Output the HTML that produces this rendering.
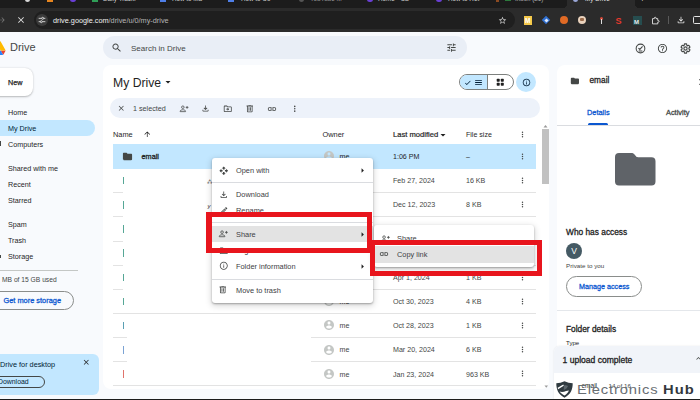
<!DOCTYPE html>
<html><head><meta charset="utf-8"><title>My Drive</title>
<style>
*{box-sizing:border-box;margin:0;padding:0}
html,body{width:700px;height:400px;overflow:hidden}
body{position:relative;background:#f8fafd;font-family:"Liberation Sans",sans-serif;color:#1f1f1f}
.a{position:absolute}
.t{position:absolute;white-space:nowrap;line-height:1;transform:translateY(calc(-50% + .6px))}
svg{position:absolute;display:block;overflow:visible}
.ic{fill:#444746}
.nav{font-size:7.2px;color:#1f1f1f;left:8px}
.hd{font-size:7.4px;color:#1f1f1f}
.cell{font-size:7.1px;color:#444746}
.mi{font-size:7.4px;color:#3c4043;left:24px}
.m{-webkit-text-stroke:.3px currentColor}
.sep{position:absolute;height:1px;background:#e3e3e3}
</style></head><body>

<!-- ===== browser chrome ===== -->
<div class="a" id="tabstrip" style="left:0;top:0;width:700px;height:8px;background:#1c1c1c;overflow:hidden">
  <div class="a" style="left:567px;top:0;width:68px;height:8px;background:#2b2b2b"></div><div class="a" style="left:563px;top:4px;width:4px;height:4px;background:radial-gradient(circle at 0 0,#1c1c1c 3.800px,#2b2b2b 4.200px)"></div><div class="a" style="left:635px;top:4px;width:4px;height:4px;background:radial-gradient(circle at 100% 0,#1c1c1c 3.800px,#2b2b2b 4.200px)"></div>
  <div class="a" style="left:25px;top:-3px;width:5px;height:5px;border-radius:3px;background:#d8d8d8"></div>
  <div class="a" style="left:47px;top:-3px;width:6px;height:5px;background:#e8861f"></div>
  <div class="a" style="left:70px;top:-3px;width:6px;height:5px;border-radius:3px;background:#6a3fd6"></div>
  <div class="a" style="left:92px;top:-3px;width:6px;height:5px;background:#2f9e57"></div>
  <div class="a" style="left:160px;top:-3px;width:6px;height:5px;background:#4f7fe8"></div>
  <div class="a" style="left:228px;top:-3px;width:6px;height:5px;background:#4f7fe8"></div>
  <div class="a" style="left:299px;top:-3px;width:5px;height:5px;border-radius:3px;background:#555"></div>
  <div class="a" style="left:367px;top:-3px;width:6px;height:5px;border-radius:3px;background:#6a3fd6"></div>
  <div class="a" style="left:436px;top:-3px;width:6px;height:5px;border-radius:3px;background:#6a3fd6"></div>
  <div class="a" style="left:496px;top:-3px;width:3px;height:5px;background:#8a4a22"></div>
  <div class="a" style="left:505px;top:-3px;width:6px;height:4px;background:#2c7a3c"></div>
  <div class="a" style="left:573px;top:-3px;width:5px;height:5px;border-radius:3px;background:#9aa7d8"></div>
  <span class="t tb" style="left:103px">Daily Tracki</span>
  <span class="t tb" style="left:172px">How to Ma</span>
  <span class="t tb" style="left:241px">How to Co</span>
  <span class="t tb" style="left:310px;color:#9a9a9a">YouTube M</span>
  <span class="t tb" style="left:378px">Home - Ca</span>
  <span class="t tb" style="left:448px">How to Ret</span>
  <span class="t tb" style="left:515px;color:#aaa">Inbox (21)</span>
  <span class="t tb" style="left:585px;color:#e8e8e8">My Drive</span>
  <span class="t tb" style="left:640px;color:#ddd;font-size:8px">+</span>
</div>
<style>.tb{font-size:6.3px;color:#cfcfcf;top:-1.2px}</style>
<div class="a" id="toolbar" style="left:0;top:8px;width:700px;height:24px;background:#2b2b2b"></div>
<div class="a" id="urlpill" style="left:34px;top:11px;width:481px;height:18px;border-radius:9px;background:#1f1f1f"></div>
<div class="a" style="left:36px;top:14px;width:12px;height:12px;border-radius:6px;background:#3a3a3a"></div>
<svg style="left:38px;top:16px" width="8" height="8" viewBox="0 0 24 24"><g fill="none" stroke="#e3e3e3" stroke-width="2.6"><path d="M2 7h9M17 7h5M2 17h5M13 17h9"/><circle cx="14" cy="7" r="3"/><circle cx="10" cy="17" r="3"/></g></svg>
<svg style="left:-2px;top:16px" width="8" height="8" viewBox="0 0 24 24"><path d="M12 4l-1.4 1.4 5.6 5.6H2v2h14.2l-5.6 5.6L12 20l8-8z" fill="#777"/></svg>
<svg style="left:15.500px;top:15px" width="10" height="10" viewBox="0 0 24 24"><path d="M19 6.41L17.59 5 12 10.590 6.41 5 5 6.410 10.590 12 5 17.590 6.410 19 12 13.410 17.590 19 19 17.590 13.410 12z" fill="#e3e3e3"/></svg>
<span class="t" id="url" style="left:53px;top:20.3px;font-size:7.3px;color:#f1f1f1">drive.google.com<span style="color:#b5b5b5">/drive/u/0/my-drive</span></span>
<svg style="left:498px;top:15.5px" width="9" height="9" viewBox="0 0 24 24"><path fill="#e3e3e3" d="M22 9.240l-7.190-.62L12 2 9.190 8.630 2 9.240l5.460 4.730L5.820 21 12 16.770 18.180 21l-1.630-7.030L22 9.240zM12 15.400l-3.760 2.270 1-4.280-3.320-2.880 4.380-.38L12 6.100l1.710 4.040 4.380.380-3.320 2.880 1 4.280L12 15.400z"/></svg>
<!-- extensions -->
<div class="a" style="left:524px;top:16px;width:8px;height:9px;background:#f4c84a"></div>
<span class="t" style="left:525px;top:20.5px;font-size:6.5px;color:#fff;font-weight:bold">M</span>
<div class="a" style="left:542px;top:16px;width:8px;height:8px;background:#2f6fd0;transform:rotate(45deg) scale(.75)"></div>
<div class="a" style="left:544.500px;top:18.500px;width:3px;height:3px;background:#dfe9fb;transform:rotate(45deg)"></div>
<div class="a" style="left:560px;top:16px;width:8px;height:8px;border-radius:4px;background:#e06a25"></div>
<div class="a" style="left:578px;top:16px;width:8px;height:8px;border-radius:4px;background:#e9d2bd"></div>
<div class="a" style="left:580px;top:18px;width:4px;height:3px;background:#9b6b4b;border-radius:1px"></div>
<div class="a" style="left:599.500px;top:16.500px;width:3px;height:3px;border-radius:2px;background:#d64a3a"></div>
<div class="a" style="left:600.500px;top:19px;width:1px;height:4.500px;background:#ddd"></div>
<span class="t" style="left:615.500px;top:20.5px;font-size:9px;color:#e5392d;font-weight:bold">S</span>
<div class="a" style="left:633px;top:16px;width:8.500px;height:8.500px;background:#264d4f"></div>
<span class="t" style="left:634px;top:20.600px;font-size:6px;color:#e6eeee;font-weight:bold">M</span>
<svg style="left:650.500px;top:15.500px" width="9" height="9" viewBox="0 0 24 24"><path fill="none" stroke="#e3e3e3" stroke-width="2.4" d="M4 7h5V5.500a2.200 2.200 0 014.400 0V7H18v5h1.500a2.200 2.200 0 010 4.400H18V21H4z"/></svg>
<div class="a" style="left:668px;top:16px;width:1px;height:8px;background:#5a5a5a"></div>
<svg style="left:676px;top:15px" width="10" height="10" viewBox="0 0 24 24"><path fill="#e3e3e3" d="M18 15v3H6v-3H4v3c0 1.100.9 2 2 2h12c1.100 0 2-.9 2-2v-3h-2zm-1-4l-1.410-1.410L13 12.170V4h-2v8.170L8.410 9.590 7 11l5 5 5-5z"/></svg>
<div class="a" style="left:693px;top:16px;width:9px;height:8px;border:1.200px solid #e3e3e3;border-radius:1.500px"></div>

<!-- ===== drive header ===== -->
<svg style="left:-10.500px;top:41px" width="15.500" height="14" viewBox="0 0 87.300 78"><path d="M6.600 66.850l3.850 6.650c.8 1.400 1.950 2.500 3.300 3.300L27.500 53H0c0 1.550.4 3.100 1.200 4.500z" fill="#0066da"/><path d="M43.650 25L29.900 1.200c-1.350.8-2.500 1.900-3.300 3.300L1.200 48.500C.4 49.900 0 51.450 0 53h27.500z" fill="#00ac47"/><path d="M73.550 76.800c1.350-.8 2.500-1.900 3.300-3.300l1.600-2.750 7.650-13.250c.8-1.400 1.200-2.950 1.200-4.500H59.800l5.850 11.500z" fill="#ea4335"/><path d="M43.650 25L57.400 1.200C56.050.4 54.500 0 52.900 0H34.400c-1.600 0-3.150.45-4.500 1.200z" fill="#00832d"/><path d="M59.800 53H27.500L13.750 76.800c1.350.8 2.900 1.200 4.500 1.200h50.800c1.600 0 3.150-.45 4.500-1.200z" fill="#2684fc"/><path d="M73.400 26.500L60.700 4.500c-.8-1.400-1.950-2.500-3.300-3.300L43.650 25 59.800 53h27.450c0-1.550-.4-3.100-1.200-4.500z" fill="#ffba00"/></svg>
<span class="t" id="drive" style="left:10px;top:46.700px;font-size:11px;color:#444746">Drive</span>
<div class="a" id="search" style="left:102.500px;top:36px;width:364px;height:23px;border-radius:11.500px;background:#e9eef6"></div>
<svg class="ic" style="left:111px;top:42.200px" width="11.500" height="11.500" viewBox="0 0 24 24"><path d="M15.500 14h-.79l-.28-.27C15.410 12.590 16 11.110 16 9.500 16 5.910 13.090 3 9.500 3S3 5.910 3 9.500 5.910 16 9.500 16c1.610 0 3.090-.59 4.230-1.570l.27.280v.79l5 4.990L20.490 19l-4.990-5zm-6 0C7.010 14 5 11.990 5 9.500S7.010 5 9.500 5 14 7.010 14 9.500 11.990 14 9.500 14z"/></svg>
<span class="t" id="sid" style="left:131px;top:47.800px;font-size:8px;color:#444746">Search in Drive</span>
<svg class="ic" style="left:446.200px;top:42.200px" width="11" height="11" viewBox="0 0 24 24"><path d="M3 17v2h6v-2H3zM3 5v2h10V5H3zm10 16v-2h8v-2h-8v-2h-2v6h2zM7 9v2H3v2h4v2h2V9H7zm14 4v-2H11v2h10zm-6-4h2V7h4V5h-4V3h-2v6z"/></svg>
<!-- header right icons -->
<svg style="left:635px;top:42.500px" width="11" height="11" viewBox="0 0 24 24"><g fill="none" stroke="#444746" stroke-width="2.300"><circle cx="12" cy="12" r="9.500"/><path d="M7.500 11l3 3 6-6.500M8 17.500h8"/></g></svg>
<svg class="ic" style="left:657px;top:42.500px" width="11" height="11" viewBox="0 0 24 24"><path d="M11 18h2v-2h-2v2zm1-16C6.480 2 2 6.480 2 12s4.480 10 10 10 10-4.480 10-10S17.520 2 12 2zm0 18c-4.410 0-8-3.590-8-8s3.590-8 8-8 8 3.590 8 8-3.590 8-8 8zm0-14c-2.210 0-4 1.790-4 4h2c0-1.100.9-2 2-2s2 .9 2 2c0 2-3 1.750-3 5h2c0-2.250 3-2.500 3-5 0-2.210-1.790-4-4-4z"/></svg>
<svg class="ic" style="left:679.500px;top:42.500px" width="11" height="11" viewBox="0 0 24 24"><path d="M19.430 12.980c.04-.32.070-.64.070-.98 0-.34-.03-.66-.07-.98l2.110-1.650c.19-.15.240-.42.120-.64l-2-3.460c-.09-.16-.26-.25-.44-.25-.06 0-.12.010-.17.030l-2.490 1c-.52-.4-1.080-.73-1.690-.98l-.38-2.650C14.460 2.180 14.250 2 14 2h-4c-.25 0-.46.180-.49.420l-.38 2.650c-.61.250-1.170.59-1.690.98l-2.490-1c-.06-.02-.12-.03-.18-.03-.17 0-.34.090-.43.250l-2 3.460c-.13.220-.07.490.12.640l2.110 1.650c-.04.320-.07.650-.07.980 0 .33.030.66.070.98l-2.110 1.650c-.19.150-.24.420-.12.640l2 3.460c.09.160.26.250.44.250.06 0 .12-.01.170-.03l2.490-1c.52.400 1.080.73 1.690.98l.38 2.650c.03.240.24.420.49.420h4c.25 0 .46-.18.490-.42l.38-2.650c.61-.25 1.170-.59 1.690-.98l2.490 1c.06.020.12.030.18.030.17 0 .34-.09.430-.25l2-3.460c.12-.22.070-.49-.12-.64l-2.110-1.650zM12 15.500c-1.930 0-3.500-1.570-3.500-3.500s1.570-3.500 3.500-3.500 3.500 1.570 3.500 3.500-1.570 3.500-3.500 3.500z" fill-rule="evenodd" fill="none" stroke="#444746" stroke-width="2.500"/></svg>

<!-- ===== left nav ===== -->
<div class="a" id="newbtn" style="left:-10px;top:68px;width:42.500px;height:28px;border-radius:8px;background:#fff;box-shadow:0 .5px 1.500px rgba(0,0,0,.18),0 1px 3px rgba(0,0,0,.1)"></div>
<span class="t" id="new" style="left:8px;top:81.500px;font-size:7.200px;color:#1f1f1f;-webkit-text-stroke:.25px #1f1f1f">New</span>
<div class="a" style="left:-10px;top:120px;width:104.500px;height:16px;border-radius:8px;background:#c2e7ff"></div>
<span class="t nav" style="top:112.300px">Home</span>
<span class="t nav" style="top:128.300px;color:#001d35">My Drive</span>
<span class="t nav" style="top:144.300px">Computers</span>
<div class="a" style="left:-1px;top:141px;width:2px;height:5px;background:#444746"></div>
<span class="t nav" style="top:168.300px">Shared with me</span>
<span class="t nav" style="top:184.300px">Recent</span>
<span class="t nav" style="top:200.300px">Starred</span>
<span class="t nav" style="top:224.300px">Spam</span>
<span class="t nav" style="top:240.300px">Trash</span>
<span class="t nav" style="top:256.300px">Storage</span>
<div class="a" style="left:-1px;top:255px;width:1.500px;height:3px;background:#444746"></div>
<div class="a" style="left:0;top:269.500px;width:78px;height:1.500px;background:#c4c7c5"></div>
<span class="t" style="left:2px;top:280.300px;font-size:6.700px;color:#444746">MB of 15 GB used</span>
<div class="a" style="left:-12px;top:291.300px;width:85.500px;height:19px;border-radius:9.500px;border:.7px solid #8a8d8b"></div>
<span class="t" id="gms" style="left:3.500px;top:300.200px;font-size:7.400px;color:#0b57d0;-webkit-text-stroke:.28px #0b57d0">Get more storage</span>
<div class="a" style="left:-8px;top:354px;width:106.500px;height:41px;border-radius:6px;background:#c2e7ff"></div>
<span class="t" style="left:0;top:363.700px;font-size:7.300px;color:#001d35">Drive for desktop</span>
<svg style="left:82px;top:358px" width="8.500" height="8.500" viewBox="0 0 24 24"><path d="M19 6.410L17.590 5 12 10.590 6.410 5 5 6.410 10.590 12 5 17.590 6.410 19 12 13.410 17.590 19 19 17.590 13.410 12z" fill="#1f1f1f"/></svg>
<div class="a" style="left:-10px;top:376px;width:54.500px;height:12px;border-radius:6px;border:.8px solid #444746"></div>
<span class="t" style="left:-2px;top:382.200px;font-size:6.900px;color:#001d35">Download</span>

<!-- ===== main card ===== -->
<div class="a" id="card" style="left:103px;top:64.500px;width:446px;height:324px;border-radius:8px;background:#fff"></div>
<span class="t" id="mydrive" style="left:113px;top:82.700px;font-size:12.200px;color:#1f1f1f">My Drive</span>
<svg style="left:162px;top:76.200px" width="12" height="12" viewBox="0 0 24 24"><path d="M7 10l5 5 5-5z" fill="#1f1f1f"/></svg>
<!-- view toggle -->
<div class="a" style="left:459px;top:74.200px;width:55px;height:15.500px;border-radius:8px;border:.7px solid #7d807e;background:#fff;overflow:hidden"><div class="a" style="left:0;top:0;width:27.500px;height:15px;background:#c2e7ff;border-right:.7px solid #7d807e"></div></div>
<svg style="left:463.500px;top:78.500px" width="7.500" height="7.500" viewBox="0 0 24 24"><path d="M9 16.170L4.830 12l-1.420 1.410L9 19 21 7l-1.410-1.410z" fill="#001d35"/></svg>
<svg style="left:473.500px;top:78px" width="9" height="9" viewBox="0 0 24 24"><path d="M3 18h18v-2.200H3V18zm0-4.900h18v-2.200H3v2.200zM3 6v2.200h18V6H3z" fill="#001d35"/></svg>
<svg style="left:496px;top:78px" width="8.500" height="8.500" viewBox="0 0 24 24"><g fill="#1f1f1f"><rect x="2" y="2" width="8.500" height="8.500" rx="2"/><rect x="13.500" y="2" width="8.500" height="8.500" rx="2"/><rect x="2" y="13.500" width="8.500" height="8.500" rx="2"/><rect x="13.500" y="13.500" width="8.500" height="8.500" rx="2"/></g></svg>
<div class="a" style="left:516px;top:72px;width:20px;height:20px;border-radius:10px;background:#c2e7ff"></div>
<svg style="left:521.500px;top:77.500px" width="9" height="9" viewBox="0 0 24 24"><path fill="#001d35" d="M11 7h2v2h-2zm0 4h2v6h-2zm1-9C6.480 2 2 6.480 2 12s4.480 10 10 10 10-4.480 10-10S17.520 2 12 2zm0 18c-4.410 0-8-3.590-8-8s3.590-8 8-8 8 3.590 8 8-3.590 8-8 8z"/></svg>
<!-- selection toolbar -->
<div class="a" id="selbar" style="left:110px;top:98px;width:430px;height:20px;border-radius:10px;background:#edf2fa"></div>
<svg style="left:117px;top:104px" width="8.500" height="8.500" viewBox="0 0 24 24"><path d="M19 6.410L17.590 5 12 10.590 6.410 5 5 6.410 10.590 12 5 17.590 6.410 19 12 13.410 17.590 19 19 17.590 13.410 12z" fill="#444746"/></svg>
<span class="t" id="sel" style="left:133px;top:108.300px;font-size:7.200px;color:#444746">1 selected</span>
<svg style="left:178.500px;top:103.500px" width="10" height="9.500" viewBox="0 0 26 24"><g fill="none" stroke="#444746" stroke-width="2"><circle cx="10" cy="8" r="3.300"/><path d="M3 19.500v-1.300c0-2.300 4.500-3.600 7-3.600s7 1.300 7 3.600v1.300z"/><path d="M21 5v7M17.500 8.500h7"/></g></svg>
<svg class="ic" style="left:200.500px;top:103.500px" width="9" height="9" viewBox="0 0 24 24"><path d="M18 15v3H6v-3H4v3c0 1.100.9 2 2 2h12c1.100 0 2-.9 2-2v-3h-2zm-1-4l-1.410-1.410L13 12.170V4h-2v8.170L8.410 9.590 7 11l5 5 5-5z"/></svg>
<svg class="ic" style="left:222.500px;top:103.500px" width="9.500" height="9.500" viewBox="0 0 24 24"><path d="M20 6h-8l-2-2H4c-1.100 0-2 .9-2 2v12c0 1.100.9 2 2 2h16c1.100 0 2-.9 2-2V8c0-1.100-.9-2-2-2zm0 12H4V6h5.170l2 2H20v10zm-7.840-1.590L15.590 13l-3.430-3.410L10.750 11l1 1H8v2h3.750l-1 1 1.410 1.410z"/></svg>
<svg class="ic" style="left:245px;top:103.500px" width="9.500" height="9.500" viewBox="0 0 24 24"><path d="M15 4V3H9v1H4v2h1v13c0 1.100.9 2 2 2h10c1.100 0 2-.9 2-2V6h1V4h-5zm2 15H7V6h10v13zM9 8h2v9H9zm4 0h2v9h-2z"/></svg>
<svg class="ic" style="left:267px;top:103.500px" width="10" height="10" viewBox="0 0 24 24"><path d="M3.900 12c0-1.710 1.390-3.100 3.100-3.100h4V7H7c-2.760 0-5 2.240-5 5s2.240 5 5 5h4v-1.900H7c-1.710 0-3.100-1.390-3.100-3.100zM8 13h8v-2H8v2zm9-6h-4v1.900h4c1.710 0 3.100 1.390 3.100 3.100s-1.390 3.100-3.100 3.100h-4V17h4c2.760 0 5-2.240 5-5s-2.240-5-5-5z"/></svg>
<svg class="ic" style="left:289.500px;top:103.500px" width="9.500" height="9.500" viewBox="0 0 24 24"><path d="M12 8c1.100 0 2-.9 2-2s-.9-2-2-2-2 .9-2 2 .9 2 2 2zm0 2c-1.100 0-2 .9-2 2s.9 2 2 2 2-.9 2-2-.9-2-2-2zm0 6c-1.100 0-2 .9-2 2s.9 2 2 2 2-.9 2-2-.9-2-2-2z"/></svg>
<!-- header row -->
<span class="t hd" id="hname" style="left:113px;top:134.300px">Name</span>
<svg style="left:143px;top:130px" width="8.500" height="8.500" viewBox="0 0 24 24"><path d="M4 12l1.410 1.410L11 7.830V20h2V7.830l5.580 5.590L20 12l-8-8-8 8z" fill="#1f1f1f"/></svg>
<span class="t hd" id="howner" style="left:322.500px;top:134.300px">Owner</span>
<span class="t hd" id="hmod" style="left:393px;top:134.300px;font-size:7.600px;-webkit-text-stroke:.2px #1f1f1f">Last modified</span>
<svg style="left:437px;top:128.600px" width="12" height="12" viewBox="0 0 24 24"><path d="M7 10l5 5 5-5z" fill="#1f1f1f"/></svg>
<span class="t hd" id="hsize" style="left:466px;top:134.300px;font-size:7.050px">File size</span>
<svg class="ic" style="left:517.500px;top:129.500px" width="9" height="9" viewBox="0 0 24 24"><path d="M12 8c1.100 0 2-.9 2-2s-.9-2-2-2-2 .9-2 2 .9 2 2 2zm0 2c-1.100 0-2 .9-2 2s.9 2 2 2 2-.9 2-2-.9-2-2-2zm0 6c-1.100 0-2 .9-2 2s.9 2 2 2 2-.9 2-2-.9-2-2-2z"/></svg>
<!-- scrollbar -->
<svg style="left:543px;top:123.500px" width="5" height="4" viewBox="0 0 10 8"><path d="M1 7l4-5 4 5z" fill="#9a9a9a"/></svg>
<div class="a" style="left:542px;top:129px;width:7px;height:55px;background:#c1c1c1"></div>
<svg style="left:543.500px;top:384.500px" width="4.500" height="3.500" viewBox="0 0 10 8"><path d="M1 1l4 5 4-5z" fill="#9a9a9a"/></svg>
<!-- rows -->
<div class="a" id="selrow" style="left:113px;top:144px;width:422.500px;height:24.500px;background:#c2e7ff"></div>
<svg style="left:121.500px;top:150.500px" width="11" height="11" viewBox="0 0 24 24"><path d="M10 4H4c-1.100 0-1.990.9-1.990 2L2 18c0 1.100.9 2 2 2h16c1.100 0 2-.9 2-2V8c0-1.100-.9-2-2-2h-8l-2-2z" fill="#444746"/></svg>
<span class="t m" id="email" style="left:141.500px;top:156.300px;font-size:7.300px;color:#1f1f1f">email</span>
<svg style="left:323px;top:150.1px" width="12" height="12" viewBox="0 0 24 24"><path d="M12 2C6.480 2 2 6.480 2 12s4.480 10 10 10 10-4.480 10-10S17.520 2 12 2zm0 3c1.660 0 3 1.340 3 3s-1.340 3-3 3-3-1.340-3-3 1.340-3 3-3zm0 14.200c-2.500 0-4.710-1.280-6-3.220.03-1.990 4-3.080 6-3.080 1.990 0 5.970 1.090 6 3.080-1.290 1.940-3.500 3.220-6 3.220z" fill="#c4c7c5"/></svg>
<span class="t cell" style="left:339.500px;top:157.0px;color:#1f1f1f">me</span>
<span class="t cell" style="left:393px;top:157.0px;color:#1f1f1f">1:06 PM</span>
<span class="t cell" style="left:466px;top:157.0px;color:#1f1f1f">–</span>
<svg class="ic" style="left:517.500px;top:151.7px" width="9" height="9" viewBox="0 0 24 24"><path d="M12 8c1.100 0 2-.9 2-2s-.9-2-2-2-2 .9-2 2 .9 2 2 2zm0 2c-1.100 0-2 .9-2 2s.9 2 2 2 2-.9 2-2-.9-2-2-2zm0 6c-1.100 0-2 .9-2 2s.9 2 2 2 2-.9 2-2-.9-2-2-2z"/></svg>
<svg style="left:323px;top:174.3px" width="12" height="12" viewBox="0 0 24 24"><path d="M12 2C6.480 2 2 6.480 2 12s4.480 10 10 10 10-4.480 10-10S17.520 2 12 2zm0 3c1.660 0 3 1.340 3 3s-1.340 3-3 3-3-1.340-3-3 1.340-3 3-3zm0 14.200c-2.500 0-4.710-1.280-6-3.220.03-1.990 4-3.080 6-3.080 1.990 0 5.970 1.090 6 3.080-1.290 1.940-3.500 3.220-6 3.220z" fill="#c4c7c5"/></svg>
<span class="t cell" style="left:339.500px;top:181.2px;color:#444746">me</span>
<span class="t cell" style="left:393px;top:181.2px;color:#444746">Feb 27, 2024</span>
<span class="t cell" style="left:466px;top:181.2px;color:#444746">16 KB</span>
<svg class="ic" style="left:517.500px;top:175.9px" width="9" height="9" viewBox="0 0 24 24"><path d="M12 8c1.100 0 2-.9 2-2s-.9-2-2-2-2 .9-2 2 .9 2 2 2zm0 2c-1.100 0-2 .9-2 2s.9 2 2 2 2-.9 2-2-.9-2-2-2zm0 6c-1.100 0-2 .9-2 2s.9 2 2 2 2-.9 2-2-.9-2-2-2z"/></svg>
<div class="sep" style="left:113px;top:192.2px;width:422.500px"></div>
<svg style="left:323px;top:198.4px" width="12" height="12" viewBox="0 0 24 24"><path d="M12 2C6.480 2 2 6.480 2 12s4.480 10 10 10 10-4.480 10-10S17.520 2 12 2zm0 3c1.660 0 3 1.340 3 3s-1.340 3-3 3-3-1.340-3-3 1.340-3 3-3zm0 14.200c-2.500 0-4.710-1.280-6-3.220.03-1.990 4-3.080 6-3.080 1.990 0 5.970 1.090 6 3.080-1.290 1.940-3.500 3.220-6 3.220z" fill="#c4c7c5"/></svg>
<span class="t cell" style="left:339.500px;top:205.3px;color:#444746">me</span>
<span class="t cell" style="left:393px;top:205.3px;color:#444746">Dec 12, 2023</span>
<span class="t cell" style="left:466px;top:205.3px;color:#444746">8 KB</span>
<svg class="ic" style="left:517.500px;top:200.0px" width="9" height="9" viewBox="0 0 24 24"><path d="M12 8c1.100 0 2-.9 2-2s-.9-2-2-2-2 .9-2 2 .9 2 2 2zm0 2c-1.100 0-2 .9-2 2s.9 2 2 2 2-.9 2-2-.9-2-2-2zm0 6c-1.100 0-2 .9-2 2s.9 2 2 2 2-.9 2-2-.9-2-2-2z"/></svg>
<div class="sep" style="left:113px;top:216.3px;width:422.500px"></div>
<svg style="left:323px;top:222.6px" width="12" height="12" viewBox="0 0 24 24"><path d="M12 2C6.480 2 2 6.480 2 12s4.480 10 10 10 10-4.480 10-10S17.520 2 12 2zm0 3c1.660 0 3 1.340 3 3s-1.340 3-3 3-3-1.340-3-3 1.340-3 3-3zm0 14.200c-2.500 0-4.710-1.280-6-3.220.03-1.990 4-3.080 6-3.080 1.990 0 5.970 1.090 6 3.080-1.290 1.940-3.500 3.220-6 3.220z" fill="#c4c7c5"/></svg>
<span class="t cell" style="left:339.500px;top:229.5px;color:#444746">me</span>
<span class="t cell" style="left:393px;top:229.5px;color:#444746">Jan 5, 2024</span>
<span class="t cell" style="left:466px;top:229.5px;color:#444746">2 KB</span>
<svg class="ic" style="left:517.500px;top:224.2px" width="9" height="9" viewBox="0 0 24 24"><path d="M12 8c1.100 0 2-.9 2-2s-.9-2-2-2-2 .9-2 2 .9 2 2 2zm0 2c-1.100 0-2 .9-2 2s.9 2 2 2 2-.9 2-2-.9-2-2-2zm0 6c-1.100 0-2 .9-2 2s.9 2 2 2 2-.9 2-2-.9-2-2-2z"/></svg>
<div class="sep" style="left:113px;top:240.5px;width:422.500px"></div>
<svg style="left:323px;top:246.8px" width="12" height="12" viewBox="0 0 24 24"><path d="M12 2C6.480 2 2 6.480 2 12s4.480 10 10 10 10-4.480 10-10S17.520 2 12 2zm0 3c1.660 0 3 1.340 3 3s-1.340 3-3 3-3-1.340-3-3 1.340-3 3-3zm0 14.200c-2.500 0-4.710-1.280-6-3.220.03-1.990 4-3.080 6-3.080 1.990 0 5.970 1.090 6 3.080-1.290 1.940-3.500 3.220-6 3.220z" fill="#c4c7c5"/></svg>
<span class="t cell" style="left:339.500px;top:253.7px;color:#444746">me</span>
<span class="t cell" style="left:393px;top:253.7px;color:#444746">Mar 2, 2024</span>
<span class="t cell" style="left:466px;top:253.7px;color:#444746">3 KB</span>
<svg class="ic" style="left:517.500px;top:248.4px" width="9" height="9" viewBox="0 0 24 24"><path d="M12 8c1.100 0 2-.9 2-2s-.9-2-2-2-2 .9-2 2 .9 2 2 2zm0 2c-1.100 0-2 .9-2 2s.9 2 2 2 2-.9 2-2-.9-2-2-2zm0 6c-1.100 0-2 .9-2 2s.9 2 2 2 2-.9 2-2-.9-2-2-2z"/></svg>
<div class="sep" style="left:113px;top:264.6px;width:422.500px"></div>
<svg style="left:323px;top:271.0px" width="12" height="12" viewBox="0 0 24 24"><path d="M12 2C6.480 2 2 6.480 2 12s4.480 10 10 10 10-4.480 10-10S17.520 2 12 2zm0 3c1.660 0 3 1.340 3 3s-1.340 3-3 3-3-1.340-3-3 1.340-3 3-3zm0 14.200c-2.500 0-4.710-1.280-6-3.220.03-1.990 4-3.080 6-3.080 1.990 0 5.970 1.090 6 3.080-1.290 1.940-3.500 3.220-6 3.220z" fill="#c4c7c5"/></svg>
<span class="t cell" style="left:339.500px;top:277.9px;color:#444746">me</span>
<span class="t cell" style="left:393px;top:277.9px;color:#444746">Apr 1, 2024</span>
<span class="t cell" style="left:466px;top:277.9px;color:#444746">1 KB</span>
<svg class="ic" style="left:517.500px;top:272.6px" width="9" height="9" viewBox="0 0 24 24"><path d="M12 8c1.100 0 2-.9 2-2s-.9-2-2-2-2 .9-2 2 .9 2 2 2zm0 2c-1.100 0-2 .9-2 2s.9 2 2 2 2-.9 2-2-.9-2-2-2zm0 6c-1.100 0-2 .9-2 2s.9 2 2 2 2-.9 2-2-.9-2-2-2z"/></svg>
<div class="sep" style="left:113px;top:288.8px;width:422.500px"></div>
<svg style="left:323px;top:295.1px" width="12" height="12" viewBox="0 0 24 24"><path d="M12 2C6.480 2 2 6.480 2 12s4.480 10 10 10 10-4.480 10-10S17.520 2 12 2zm0 3c1.660 0 3 1.340 3 3s-1.340 3-3 3-3-1.340-3-3 1.340-3 3-3zm0 14.200c-2.500 0-4.710-1.280-6-3.220.03-1.990 4-3.080 6-3.080 1.990 0 5.970 1.090 6 3.080-1.290 1.940-3.500 3.220-6 3.220z" fill="#c4c7c5"/></svg>
<span class="t cell" style="left:339.500px;top:302.0px;color:#444746">me</span>
<span class="t cell" style="left:393px;top:302.0px;color:#444746">Oct 30, 2023</span>
<span class="t cell" style="left:466px;top:302.0px;color:#444746">4 KB</span>
<svg class="ic" style="left:517.500px;top:296.7px" width="9" height="9" viewBox="0 0 24 24"><path d="M12 8c1.100 0 2-.9 2-2s-.9-2-2-2-2 .9-2 2 .9 2 2 2zm0 2c-1.100 0-2 .9-2 2s.9 2 2 2 2-.9 2-2-.9-2-2-2zm0 6c-1.100 0-2 .9-2 2s.9 2 2 2 2-.9 2-2-.9-2-2-2z"/></svg>
<div class="sep" style="left:113px;top:312.9px;width:422.500px"></div>
<svg style="left:323px;top:319.3px" width="12" height="12" viewBox="0 0 24 24"><path d="M12 2C6.480 2 2 6.480 2 12s4.480 10 10 10 10-4.480 10-10S17.520 2 12 2zm0 3c1.660 0 3 1.340 3 3s-1.340 3-3 3-3-1.340-3-3 1.340-3 3-3zm0 14.200c-2.500 0-4.710-1.280-6-3.220.03-1.990 4-3.080 6-3.080 1.990 0 5.970 1.090 6 3.080-1.290 1.940-3.500 3.220-6 3.220z" fill="#c4c7c5"/></svg>
<span class="t cell" style="left:339.500px;top:326.2px;color:#444746">me</span>
<span class="t cell" style="left:393px;top:326.2px;color:#444746">Oct 28, 2023</span>
<span class="t cell" style="left:466px;top:326.2px;color:#444746">1 KB</span>
<svg class="ic" style="left:517.500px;top:320.9px" width="9" height="9" viewBox="0 0 24 24"><path d="M12 8c1.100 0 2-.9 2-2s-.9-2-2-2-2 .9-2 2 .9 2 2 2zm0 2c-1.100 0-2 .9-2 2s.9 2 2 2 2-.9 2-2-.9-2-2-2zm0 6c-1.100 0-2 .9-2 2s.9 2 2 2 2-.9 2-2-.9-2-2-2z"/></svg>
<div class="sep" style="left:113px;top:337.1px;width:422.500px"></div>
<svg style="left:323px;top:343.5px" width="12" height="12" viewBox="0 0 24 24"><path d="M12 2C6.480 2 2 6.480 2 12s4.480 10 10 10 10-4.480 10-10S17.520 2 12 2zm0 3c1.660 0 3 1.340 3 3s-1.340 3-3 3-3-1.340-3-3 1.340-3 3-3zm0 14.200c-2.500 0-4.710-1.280-6-3.220.03-1.990 4-3.080 6-3.080 1.990 0 5.970 1.090 6 3.080-1.290 1.940-3.500 3.220-6 3.220z" fill="#c4c7c5"/></svg>
<span class="t cell" style="left:339.500px;top:350.4px;color:#444746">me</span>
<span class="t cell" style="left:393px;top:350.4px;color:#444746">Mar 20, 2024</span>
<span class="t cell" style="left:466px;top:350.4px;color:#444746">6 KB</span>
<svg class="ic" style="left:517.500px;top:345.1px" width="9" height="9" viewBox="0 0 24 24"><path d="M12 8c1.100 0 2-.9 2-2s-.9-2-2-2-2 .9-2 2 .9 2 2 2zm0 2c-1.100 0-2 .9-2 2s.9 2 2 2 2-.9 2-2-.9-2-2-2zm0 6c-1.100 0-2 .9-2 2s.9 2 2 2 2-.9 2-2-.9-2-2-2z"/></svg>
<div class="sep" style="left:113px;top:361.2px;width:422.500px"></div>
<svg style="left:323px;top:367.6px" width="12" height="12" viewBox="0 0 24 24"><path d="M12 2C6.480 2 2 6.480 2 12s4.480 10 10 10 10-4.480 10-10S17.520 2 12 2zm0 3c1.660 0 3 1.340 3 3s-1.340 3-3 3-3-1.340-3-3 1.340-3 3-3zm0 14.200c-2.500 0-4.710-1.280-6-3.220.03-1.990 4-3.080 6-3.080 1.990 0 5.970 1.090 6 3.080-1.290 1.940-3.500 3.220-6 3.220z" fill="#c4c7c5"/></svg>
<span class="t cell" style="left:339.500px;top:374.5px;color:#444746">me</span>
<span class="t cell" style="left:393px;top:374.5px;color:#444746">Jan 23, 2024</span>
<span class="t cell" style="left:466px;top:374.5px;color:#444746">963 KB</span>
<svg class="ic" style="left:517.500px;top:369.2px" width="9" height="9" viewBox="0 0 24 24"><path d="M12 8c1.100 0 2-.9 2-2s-.9-2-2-2-2 .9-2 2 .9 2 2 2zm0 2c-1.100 0-2 .9-2 2s.9 2 2 2 2-.9 2-2-.9-2-2-2zm0 6c-1.100 0-2 .9-2 2s.9 2 2 2 2-.9 2-2-.9-2-2-2z"/></svg>
<div class="sep" style="left:113px;top:385.4px;width:422.500px"></div>
<div class="a" style="left:123px;top:186px;width:90px;height:115px;background:#fff"></div>
<div class="a" style="left:126.500px;top:330px;width:184px;height:40px;background:#fff"></div>
<div class="a" style="left:123px;top:176.9px;width:1px;height:7.500px;background:#56a796"></div>
<div class="a" style="left:123px;top:201.0px;width:1px;height:7.500px;background:#56a796"></div>
<div class="a" style="left:123px;top:225.2px;width:1px;height:7.500px;background:#56a796"></div>
<div class="a" style="left:123px;top:249.4px;width:1px;height:7.500px;background:#56a796"></div>
<div class="a" style="left:123px;top:273.6px;width:1px;height:7.500px;background:#56a796"></div>
<div class="a" style="left:123px;top:297.7px;width:1px;height:7.500px;background:#56a796"></div>
<div class="a" style="left:123px;top:321.9px;width:1px;height:7.500px;background:#5a9fb3"></div>
<div class="a" style="left:123px;top:346.1px;width:1px;height:7.500px;background:#7ba3d4"></div>
<div class="a" style="left:123px;top:370.2px;width:1px;height:7.500px;background:#e0736b"></div>
<!--MAINEND-->
<!-- ===== details side panel ===== -->
<div class="a" id="side" style="left:557px;top:64.500px;width:160px;height:340px;border-radius:8px 0 0 0;background:#fff"></div>
<svg style="left:570.300px;top:75.700px" width="9.800" height="9.800" viewBox="0 0 24 24"><path d="M10 4H4c-1.100 0-1.990.9-1.990 2L2 18c0 1.100.9 2 2 2h16c1.100 0 2-.9 2-2V8c0-1.100-.9-2-2-2h-8l-2-2z" fill="#444746"/></svg>
<span class="t" id="semail" style="left:589.500px;top:80.200px;font-size:8.300px;color:#1f1f1f;-webkit-text-stroke:.3px #1f1f1f">email</span>
<svg style="left:696.500px;top:76.500px" width="10" height="10" viewBox="0 0 24 24"><path d="M19 6.410L17.590 5 12 10.590 6.410 5 5 6.410 10.590 12 5 17.590 6.410 19 12 13.410 17.590 19 19 17.590 13.410 12z" fill="#1f1f1f"/></svg>
<span class="t" id="details" style="left:587px;top:112px;font-size:7.400px;color:#0b57d0;-webkit-text-stroke:.28px #0b57d0">Details</span>
<span class="t" id="activity" style="left:666px;top:112px;font-size:7.400px;color:#444746;-webkit-text-stroke:.28px #444746">Activity</span>
<div class="a" style="left:588px;top:122.900px;width:20px;height:1.800px;border-radius:1.500px 1.500px 0 0;background:#0b57d0"></div>
<div class="a" style="left:557px;top:124.500px;width:143px;height:.8px;background:#dadce0"></div>
<svg style="left:614.500px;top:153px" width="40.500" height="32.500" viewBox="0 0 40.500 32.500"><path d="M4 0h12.500c1.400 0 2.200.5 3 1.500l1.500 1.800c.5.600 1 .9 2 .9H36.500a4 4 0 014 4v20.300a4 4 0 01-4 4H4a4 4 0 01-4-4V4a4 4 0 014-4z" fill="#5f6368"/></svg>
<span class="t" id="wha" style="left:566px;top:232.400px;font-size:8.350px;color:#1f1f1f;-webkit-text-stroke:.3px #1f1f1f">Who has access</span>
<div class="a" style="left:566px;top:242.500px;width:16px;height:16px;border-radius:8px;background:#455a64"></div>
<span class="t" style="left:571.300px;top:250.800px;font-size:8.500px;color:#fff">V</span>
<span class="t" id="priv" style="left:566px;top:265.700px;font-size:6.250px;color:#444746">Private to you</span>
<div class="a" style="left:566px;top:276.300px;width:76px;height:20.700px;border-radius:10.350px;border:.7px solid #8a8d8b"></div>
<span class="t" id="manage" style="left:579px;top:285.500px;font-size:7.200px;color:#0b57d0;-webkit-text-stroke:.28px #0b57d0">Manage access</span>
<div class="a" style="left:557px;top:310px;width:143px;height:1.300px;background:#e4e7eb"></div>
<span class="t" id="fdet" style="left:566px;top:328.800px;font-size:8.350px;color:#1f1f1f;-webkit-text-stroke:.3px #1f1f1f">Folder details</span>
<span class="t" style="left:566px;top:342.300px;font-size:6.100px;color:#1f1f1f">Type</span>
<!-- upload toast -->
<div class="a" id="toast" style="left:553.500px;top:346px;width:160px;height:60px;border-radius:6px 0 0 0;background:#fff;box-shadow:0 0 2px rgba(0,0,0,.1)"></div>
<div class="a" style="left:553.500px;top:346px;width:160px;height:26.500px;border-radius:6px 0 0 0;background:#f1f4f9"></div>
<span class="t" id="upl" style="left:562.500px;top:359.800px;font-size:8.550px;color:#1f1f1f;-webkit-text-stroke:.3px #1f1f1f">1 upload complete</span>
<svg style="left:694px;top:354px" width="9" height="9" viewBox="0 0 24 24"><path d="M7.410 15.410L12 10.830l4.590 4.580L18 14l-6-6-6 6z" fill="#444746"/></svg>
<span class="t" style="left:581.500px;top:385.500px;font-size:6.500px;color:#1f1f1f">email</span>
<span class="t" style="left:608.500px;top:385.500px;font-size:6.200px;color:#444746">14 of 16</span>
<!-- watermark -->
<svg style="left:556px;top:381px" width="17" height="17" viewBox="0 0 17 17"><path d="M8.500.3C6 1.500 3 2.200.3 2.300.3 8 2 13.500 8.500 16.700 15 13.500 16.700 8 16.700 2.300 14 2.200 11 1.500 8.500.3z" fill="#2f3a40"/><path d="M3.600 10.600c1.900.8 4.400.5 6.400-.6l2.900-.4c-.8 2.300-2.300 3.700-4.400 4.800-2.300-1.100-4-2.300-4.900-3.800z" fill="#fff"/><path d="M1.700 6.800l5.600-3.300.5 1.300-5.700 3.400z" fill="#fff"/><path d="M8 4.500c1.500-.6 3-.4 4 .6-.6 2-2 3.300-4.300 3.800z" fill="#5d676d"/></svg>
<span class="t" id="wm1" style="left:576.800px;top:390px;font-size:12.300px;color:#686e73;letter-spacing:.7px;transform-origin:0 50%;transform:translateY(-50%) scale(1.2,1)">Electronics</span>
<span class="t" id="wm2" style="left:663.200px;top:390px;font-size:12.300px;color:#33383d;font-weight:bold;letter-spacing:.9px;transform-origin:0 50%;transform:translateY(-50%) scale(1.2,1)">Hub</span>
<!--SIDEEND-->
<!-- ===== context menu ===== -->
<div class="a" style="left:206px;top:178.500px;width:5px;height:5px;background:#fff"></div>
<span class="t" style="left:206.500px;top:181px;font-size:5px;color:#333">⁂</span>
<span class="t" style="left:207.500px;top:204.500px;font-size:6px;color:#333;font-style:italic">y</span>
<div class="a" id="ctx" style="left:212px;top:158px;width:161px;height:144.500px;border-radius:3px;background:#fff;box-shadow:0 1px 2px rgba(0,0,0,.3),0 2px 6px 1px rgba(0,0,0,.15)">
  <div class="a" style="left:0;top:67.500px;width:161px;height:16.500px;background:#e3e3e3"></div>
  <div class="sep" style="left:0;top:23.800px;width:161px;background:#dadce0"></div>
  <div class="sep" style="left:0;top:63.800px;width:161px;background:#dadce0"></div>
  <div class="sep" style="left:0;top:120.500px;width:161px;background:#dadce0"></div>
  <svg class="ic" style="left:6.500px;top:7.500px" width="9.500" height="9.500" viewBox="0 0 24 24"><path d="M10 9h4V6h3l-5-5-5 5h3v3zm-1 1H6V7l-5 5 5 5v-3h3v-4zm14 2l-5-5v3h-3v4h3v3l5-5zm-9 3h-4v3H7l5 5 5-5h-3v-3z"/></svg>
  <span class="t mi" id="m1" style="top:12.300px">Open with</span>
  <svg style="left:144.500px;top:6.500px" width="11" height="11" viewBox="0 0 24 24"><path d="M10 17l5-5-5-5v10z" fill="#1f1f1f"/></svg>
  <svg class="ic" style="left:6.500px;top:31.500px" width="9.500" height="9.500" viewBox="0 0 24 24"><path d="M18 15v3H6v-3H4v3c0 1.100.9 2 2 2h12c1.100 0 2-.9 2-2v-3h-2zm-1-4l-1.410-1.410L13 12.170V4h-2v8.170L8.410 9.590 7 11l5 5 5-5z"/></svg>
  <span class="t mi" id="m2" style="top:35.800px">Download</span>
  <svg class="ic" style="left:6.500px;top:47.500px" width="9.500" height="9.500" viewBox="0 0 24 24"><path d="M14.060 9.020l.92.920L5.920 19H5v-.92l9.060-9.060M17.660 3c-.25 0-.51.100-.7.290l-1.830 1.830 3.750 3.750 1.830-1.830c.39-.39.390-1.020 0-1.410l-2.340-2.340c-.2-.2-.45-.29-.71-.29zm-3.600 3.190L3 17.250V21h3.750L17.810 9.940l-3.750-3.750z"/></svg>
  <span class="t mi" id="m3" style="top:52.300px">Rename</span>
  <svg style="left:6px;top:71px" width="10.500" height="9.500" viewBox="0 0 26 24"><g fill="none" stroke="#444746" stroke-width="2"><circle cx="10" cy="8" r="3.300"/><path d="M3 19.500v-1.300c0-2.300 4.500-3.600 7-3.600s7 1.300 7 3.600v1.300z"/><path d="M21 5v7M17.500 8.500h7"/></g></svg>
  <span class="t mi" id="m4" style="top:76.300px">Share</span>
  <svg style="left:144.500px;top:70.500px" width="11" height="11" viewBox="0 0 24 24"><path d="M10 17l5-5-5-5v10z" fill="#1f1f1f"/></svg>
  <svg class="ic" style="left:6.500px;top:87.500px" width="9.500" height="9.500" viewBox="0 0 24 24"><path d="M20 6h-8l-2-2H4c-1.100 0-2 .9-2 2v12c0 1.100.9 2 2 2h16c1.100 0 2-.9 2-2V8c0-1.100-.9-2-2-2zm0 12H4V6h5.170l2 2H20v10z"/></svg>
  <span class="t mi" id="m5" style="top:92.300px">Organize</span>
  <svg class="ic" style="left:6.500px;top:103.300px" width="9.500" height="9.500" viewBox="0 0 24 24"><path d="M11 7h2v2h-2zm0 4h2v6h-2zm1-9C6.480 2 2 6.480 2 12s4.480 10 10 10 10-4.480 10-10S17.520 2 12 2zm0 18c-4.410 0-8-3.590-8-8s3.590-8 8-8 8 3.590 8 8-3.590 8-8 8z"/></svg>
  <span class="t mi" id="m6" style="top:107.900px">Folder information</span>
  <svg style="left:144.500px;top:102.800px" width="11" height="11" viewBox="0 0 24 24"><path d="M10 17l5-5-5-5v10z" fill="#1f1f1f"/></svg>
  <svg class="ic" style="left:6.300px;top:127.300px" width="9.500" height="9.500" viewBox="0 0 24 24"><path d="M15 4V3H9v1H4v2h1v13c0 1.100.9 2 2 2h10c1.100 0 2-.9 2-2V6h1V4h-5zm2 15H7V6h10v13zM9 8h2v9H9zm4 0h2v9h-2z"/></svg>
  <span class="t mi" id="m7" style="top:131.700px">Move to trash</span>
</div>
<!-- ===== submenu ===== -->
<div class="a" id="sub" style="left:374px;top:225px;width:160px;height:42px;border-radius:3px;background:#fff;box-shadow:0 1px 2px rgba(0,0,0,.3),0 2px 6px 1px rgba(0,0,0,.15)">
  <div class="a" style="left:0;top:21px;width:160px;height:16.500px;background:#e3e3e3"></div>
  <svg style="left:5.500px;top:8.500px" width="10.500" height="9.500" viewBox="0 0 26 24"><g fill="none" stroke="#444746" stroke-width="2"><circle cx="10" cy="8" r="3.300"/><path d="M3 19.500v-1.300c0-2.300 4.500-3.600 7-3.600s7 1.300 7 3.600v1.300z"/><path d="M21 5v7M17.500 8.500h7"/></g></svg>
  <span class="t mi" id="s1" style="left:23px;top:13.300px">Share</span>
  <svg class="ic" style="left:5px;top:24.300px" width="10" height="10" viewBox="0 0 24 24"><path d="M3.900 12c0-1.710 1.390-3.100 3.100-3.100h4V7H7c-2.760 0-5 2.240-5 5s2.240 5 5 5h4v-1.900H7c-1.710 0-3.100-1.390-3.100-3.100zM8 13h8v-2H8v2zm9-6h-4v1.900h4c1.710 0 3.100 1.390 3.100 3.100s-1.390 3.100-3.100 3.100h-4V17h4c2.760 0 5-2.240 5-5s-2.240-5-5-5z"/></svg>
  <span class="t mi" id="s2" style="left:23px;top:29.400px">Copy link</span>
</div>
<!-- ===== red highlight boxes ===== -->
<div class="a" id="red1" style="left:206px;top:212px;width:166px;height:40.500px;border:5px solid #e8151d;border-left-width:6px"></div>
<div class="a" id="red2" style="left:370px;top:240px;width:172px;height:35.500px;border:5px solid #e8151d"></div>
<!--MENUSEND-->
<div class="a" style="left:0;top:398.500px;width:700px;height:1.500px;background:#1c1c1c"></div>
</body></html>
